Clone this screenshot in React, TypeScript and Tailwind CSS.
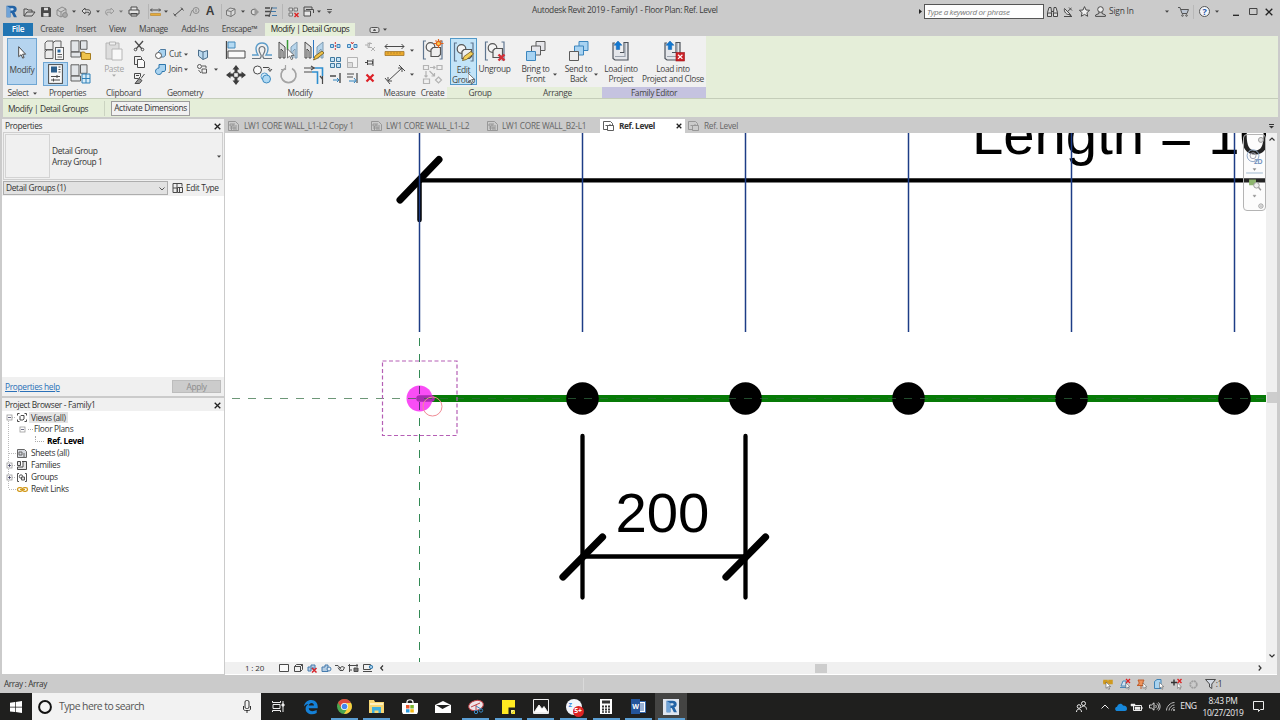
import type { ReactNode } from "react";

interface BoxProps {
  className?: string;
  children?: ReactNode;
}

function Cell({ className = "", children }: BoxProps) {
  return <div className={`flex shrink-0 items-center justify-center ${className}`}>{children}</div>;
}

interface IconProps {
  w: number;
  h: number;
  stroke?: string;
  sw?: number;
  fill?: string;
  className?: string;
  children: ReactNode;
}

function Icon({ w, h, stroke = "#4a4a4a", sw = 1, fill = "none", className = "", children }: IconProps) {
  return (
    <svg
      width={w}
      height={h}
      viewBox={`0 0 ${w} ${h}`}
      fill={fill}
      stroke={stroke}
      strokeWidth={sw}
      className={`block shrink-0 overflow-visible ${className}`}
    >
      {children}
    </svg>
  );
}

function Caret({ color = "#444" }: { color?: string }) {
  return (
    <Icon w={4} h={3} stroke="none" fill={color}>
      <path d="M0 0.5h4l-2 2.2z" />
    </Icon>
  );
}

function Cursor() {
  return <path d="M0 0v9l2.2-2 1.6 3.6 1.5-.7-1.6-3.4h3z" fill="#fff" stroke="#555" strokeWidth={0.8} />;
}

function RevitLogo({ size = 12 }: { size?: number }) {
  return (
    <svg width={size} height={size} viewBox="0 0 12 12" className="block shrink-0">
      <path d="M1.5.8h5.600c2.4 0 3.700 1.200 3.700 3.100 0 1.500-.8 2.500-2.100 2.900l2.300 4.400H8.200L6.200 7.300H5v3.900H1.500z" fill="#2363a5" />
      <path d="M1.500.8 5 3v8.200H1.500z" fill="#6fa3d8" />
      <path d="M5 3h1.800c.8 0 1.200.4 1.200 1s-.4 1.100-1.200 1.100H5z" fill="#cfdff0" />
    </svg>
  );
}

function CloseX({ size = 7 }: { size?: number }) {
  return (
    <Icon w={size} h={size} stroke="#222" sw={1.3}>
      <path d={`M.7.7l${size - 1.4} ${size - 1.4}M${size - 0.7}.7L.7 ${size - 0.7}`} />
    </Icon>
  );
}

function TitleBar() {
  return (
    <div className="flex h-[23px] items-center pl-[3px] text-[#3c3c3c]">
      <Cell className="w-[16px]"><RevitLogo size={13} /></Cell>
      <Cell className="w-[20px]">
        <Icon w={12} h={10}><path d="M1 9V2h3l1 1h4v2M1 9l3-4h8L9 9z" /></Icon>
      </Cell>
      <Cell className="w-[14px]">
        <Icon w={10} h={10} fill="#4a4a4a"><path d="M.5.500h8l1 1v8h-9z" /><path d="M3 .8h4v2.400H3zM2.400 6h5.200v3.400H2.400z" fill="#ddd" stroke="none" /></Icon>
      </Cell>
      <Cell className="w-[18px]">
        <Icon w={12} h={12} stroke="#8b8b8b"><path d="M1 4l5-3 4 2v5L5 11 1 9zM1 4l4 2v5M5 6l5-3" /><circle cx="9" cy="9" r="2.4" fill="#aaa" /></Icon>
      </Cell>
      <Cell className="w-[5px]"><Caret /></Cell>
      <Cell className="w-[20px]">
        <Icon w={11} h={9}><path d="M4 1L1 4l3 3V5.200h3c2 0 1.500 2 .5 3C10 7.500 10.500 2.800 7 2.800H4z" fill="#e0e0e0" /></Icon>
      </Cell>
      <Cell className="w-[4px]"><Caret /></Cell>
      <Cell className="w-[18px]">
        <Icon w={11} h={9} stroke="#9b9b9b"><path d="M7 1l3 3-3 3V5.200H4c-2 0-1.500 2-.5 3C1 7.500.5 2.800 4 2.800h3z" /></Icon>
      </Cell>
      <Cell className="w-[6px]"><Caret color="#777" /></Cell>
      <Cell className="w-[20px]">
        <Icon w={12} h={11}><path d="M3 4V1h6v3M1 4h10v4H1zM3 7.500h6V10H3z" fill="#e4e4e4" /></Icon>
      </Cell>
      <Cell className="w-[4px]" />
      <Cell className="h-[15px] w-[13px] border-l border-[#b5b5b5]">
        <Icon w={11} h={8}><path d="M.5 2h10M2 .5L.5 2 2 3.500M9 .5L10.500 2 9 3.500" /><path d="M.5 5.500h10v2H.5z" fill="#e5ac3a" stroke="#b98223" strokeWidth={0.6} /></Icon>
      </Cell>
      <Cell className="w-[10px]"><Caret /></Cell>
      <Cell className="w-[15px]">
        <Icon w={11} h={10}><path d="M1.500 8.500l8-7M.5 6.500l2.500 3M8 .5l2.500 3" /></Icon>
      </Cell>
      <Cell className="w-[16px]">
        <Icon w={11} h={10} stroke="#858585" sw={0.9}><circle cx="7" cy="3.500" r="3" /><path d="M4 3.500H3L1 9M7 2v3" /></Icon>
      </Cell>
      <Cell className="w-[16px] pb-px font-['Liberation_Sans'] text-[12px] font-bold">A</Cell>
      <Cell className="w-[3px]" />
      <Cell className="h-[15px] w-[20px] border-l border-[#b5b5b5]">
        <Icon w={11} h={10} stroke="#777"><path d="M.5 3.500L4 1l5 1v5L5 9.500.5 8zM.5 3.500L5 4.500v5M5 4.500L9 2" fill="#d8d8d8" /></Icon>
      </Cell>
      <Cell className="w-[4px]"><Caret /></Cell>
      <Cell className="w-[18px]">
        <Icon w={9} h={10} stroke="#6b6b6b"><circle cx="4" cy="5" r="2.800" fill="#ddd" /><path d="M4.500 .5L9 5 4.500 9.500z" fill="#999" stroke="none" /></Icon>
      </Cell>
      <Cell className="w-[16px]">
        <Icon w={12} h={10}><path d="M0 1h5M0 4.500h5M0 8.500h5" strokeWidth={1.600} /><path d="M7 1h5M6 4.500h5M7 8.500h5" stroke="#4078a8" /><path d="M7 0L4 10" /></Icon>
      </Cell>
      <Cell className="w-[3px]" />
      <Cell className="h-[15px] w-[21px] border-l border-[#b5b5b5]">
        <Icon w={11} h={10} stroke="#777"><path d="M1 1h3.500v3H1zM6 1h3.500v3H6zM1 6h3.500v3H1z" fill="#ddd" /><path d="M6.500 6l4 4M10.500 6l-4 4" stroke="#d22" strokeWidth={1.400} /></Icon>
      </Cell>
      <Cell className="w-[11px]">
        <Icon w={11} h={11}><path d="M1 5V1h8v2M3 3.500h7.500V7" /><path d="M1 5h6.500v5H1z" fill="#e6e6e6" /></Icon>
      </Cell>
      <Cell className="w-[9px]"><Caret /></Cell>
      <Cell className="w-[12px]">
        <Icon w={5} h={5} stroke="#555"><path d="M0 .5h5" /><path d="M0 2.300h5l-2.500 2.500z" fill="#555" stroke="none" /></Icon>
      </Cell>

      <div className="ml-[197px] w-[200px] pb-[3px] text-[8.4px] whitespace-nowrap">
        Autodesk Revit 2019 - Family1 - Floor Plan: Ref. Level
      </div>

      <div className="ml-auto flex items-center">
        <Icon w={3} h={5} stroke="none" fill="#222" className="mr-[2px]"><path d="M0 0l3 2.500L0 5z" /></Icon>
        <div className="mr-[1px] flex h-[15px] w-[120px] items-center border border-[#555] bg-[#fdfdfd] pl-[2px] text-[8px] text-[#777] italic">
          Type a keyword or phrase
        </div>
        <Cell className="w-[14px]">
          <Icon w={11} h={10} stroke="#454545"><path d="M2 .5h2l.5 5v4h-4v-4zM7 .5h2l1.500 5v4h-4v-4zM4.500 4.500h2M.5 6h4M6.500 6h4" fill="#ddd" /></Icon>
        </Cell>
        <Cell className="w-[18px]">
          <Icon w={10} h={10}><path d="M1.500 1.500c-1 3 2 7 6 6zM4.500 4.500l4-3.500M1 9.500h8L6 7.500M6 .5l3 3" fill="#ddd" /></Icon>
        </Cell>
        <Cell className="w-[14px]">
          <Icon w={11} h={11}><path d="M5.500.6l1.500 3.400 3.600.3-2.700 2.400.8 3.600-3.200-1.900-3.200 1.900.8-3.600L.4 4.300 4 4z" fill="#eee" /></Icon>
        </Cell>
        <Cell className="w-[18px]">
          <Icon w={11} h={11}><circle cx="5.500" cy="3.500" r="2.800" fill="#eee" /><path d="M4 6v1.500L.6 9v1.400h9.800V9L7 7.500V6" /></Icon>
        </Cell>
        <div className="w-[52px] text-[8.4px] tracking-[-0.2px]">Sign In</div>
        <Cell className="w-[12px]"><Caret /></Cell>
        <Cell className="w-[20px]">
          <Icon w={11} h={10} stroke="#555"><path d="M0 .5h2l2 6h5l1.500-4H3" fill="#bcc5d2" /><circle cx="4.500" cy="8.500" r=".8" /><circle cx="8.500" cy="8.500" r=".8" /></Icon>
        </Cell>
        <Cell className="h-[14px] w-[22px] border-l border-[#b8b8b8]">
          <div className="flex h-[11px] w-[11px] items-center justify-center rounded-full border border-[#555] bg-[#f4f6fa] text-[9px] font-bold text-[#2857a8]">?</div>
        </Cell>
        <Cell className="w-[4px]"><Caret /></Cell>
        <Cell className="w-[28px] pl-[6px]"><Icon w={6} h={8} stroke="#222" sw={1.300}><path d="M0 7.300h6" /></Icon></Cell>
        <Cell className="w-[11px]"><Icon w={8} h={7} stroke="#444"><path d="M.5.500h7.500v6H.5z" /></Icon></Cell>
        <Cell className="w-[22px]"><CloseX size={8} /></Cell>
      </div>
    </div>
  );
}

function TabStrip() {
  return (
    <div className="flex h-[13px] items-center pl-[3px] text-[8.3px] text-[#444] [&>*]:h-full">
      <Cell className="w-[30px] bg-[#2175b3] font-semibold text-white">File</Cell>
      <Cell className="w-[38px]">Create</Cell>
      <Cell className="w-[30px]">Insert</Cell>
      <Cell className="w-[33px]">View</Cell>
      <Cell className="w-[39px]">Manage</Cell>
      <Cell className="w-[44px]">Add-Ins</Cell>
      <Cell className="w-[45px]">Enscape™</Cell>
      <Cell className="w-[3px]" />
      <Cell className="w-[90px] bg-[#e5eed9] tracking-[-0.45px] whitespace-nowrap text-[#222]">Modify | Detail Groups</Cell>
      <Cell className="ml-[14px] gap-[3px]">
        <Icon w={11} h={6} stroke="#555"><rect x="1" y=".5" width="9" height="5" rx="1.500" fill="#ddd" /><path d="M4.500 3.500h2L5.500 2z" fill="#222" /></Icon>
        <Caret />
      </Cell>
    </div>
  );
}

interface PanelProps extends BoxProps {
  label: ReactNode;
  labelClass?: string;
}

function Panel({ label, labelClass = "", className = "", children }: PanelProps) {
  return (
    <div className={`flex shrink-0 flex-col bg-[#f0f0f0] ${className}`}>
      <div className="flex h-[51px] pt-[2px]">{children}</div>
      <div className={`flex h-[11px] items-center justify-center pt-px text-[8.4px] whitespace-nowrap text-[#444] ${labelClass}`}>{label}</div>
    </div>
  );
}

interface BigButtonProps extends BoxProps {
  icon: ReactNode;
}

function BigButton({ icon, className = "", children }: BigButtonProps) {
  return (
    <div className={`flex h-[47px] shrink-0 flex-col items-center text-center text-[8.4px] leading-[9.5px] whitespace-nowrap text-[#444] ${className}`}>
      <div className="flex h-[26px] items-center">{icon}</div>
      {children}
    </div>
  );
}

function MoveIcon() {
  return (
    <Icon w={20} h={20} stroke="none" fill="#3d3d3d">
      <path d="M10 0l3.500 4.500h-2V8h-3V4.500h-2zM10 20l3.500-4.500h-2V12h-3v3.500h-2zM0 10l4.500-3.500v2H8v3H4.500v2zM20 10l-4.500-3.500v2H12v3h3.500v2z" />
      <path d="M7.700 7.700h4.600v4.600H7.700z" fill="#f0f0f0" stroke="#3d3d3d" />
    </Icon>
  );
}

function GroupBrackets({ children }: { children?: ReactNode }) {
  return (
    <Icon w={22} h={20} stroke="#555" sw={1.200}>
      <path d="M4 1H1.500v18H4M17.500 1H20v18h-2.500" stroke="#5f7690" />
      <circle cx="8.500" cy="7" r="4.300" fill="#f4f4f4" />
      <path d="M9 9.500l2-2h7.500v7l-2 2H9z" fill="#eee" />
      {children}
    </Icon>
  );
}

function LoadIcon({ close }: { close?: boolean }) {
  return (
    <Icon w={21} h={20} stroke="#4d535b" sw={1.200}>
      <path d="M4 2H2v15.500l2 1.500h13V1.500h-4v10H9" fill="#e4e6ea" />
      <path d="M4 15.500h10V2" stroke="#9aa2ad" />
      <path d="M7 0L3 4.200h2.300v4.300h3.400V4.200H11z" fill="#1379d2" stroke="#1061ab" strokeWidth={0.5} />
      {close && (
        <>
          <rect x="13" y="11.500" width="8.500" height="8.500" fill="#cc2127" stroke="#99151a" strokeWidth={0.6} />
          <path d="M15 13.700l4.400 4.200M19.400 13.700l-4.400 4.200" stroke="#fff" />
        </>
      )}
    </Icon>
  );
}

function Ribbon() {
  return (
    <div className="mr-[2px] ml-[3px] flex h-[63px] border-b border-[#c4cdb9] bg-[#e5eed9]">
      <Panel className="w-[38px]" label={<span className="flex items-center gap-[4px]">Select <Caret /></span>}>
        <BigButton
          className="ml-[4px] w-[30px] border border-[#6fa6d3] bg-[#b5d4ef]"
          icon={<Icon w={8} h={13}><path d="M.7.7v10l2.400-2 1.600 3.500 1.400-.7-1.500-3.300h3z" fill="#fff" /></Icon>}
        >
          Modify
        </BigButton>
      </Panel>

      <Panel className="w-[53px]" label="Properties">
        <div className="grid h-[48px] w-[52px] grid-cols-2 grid-rows-2">
          <Cell>
            <Icon w={20} h={20} stroke="#606060">
              <path d="M1 3L3 1h6v8.500H1zM9 3l2-2h6v6M1 12l2-2h6v8.500H1zM1 9.500v2" fill="#ececec" />
              <rect x="11.500" y="7.500" width="8" height="12" fill="#f7f7f7" /><path d="M13.500 9.500h3v3h-3z" fill="#2d689d" stroke="none" /><path d="M13.500 14.500h4.500M13.500 17h4.500" />
            </Icon>
          </Cell>
          <Cell>
            <Icon w={21} h={20} stroke="#606060">
              <path d="M1 .8h8v11H1zM10.500.8h6.500v8.500h-6.500zM1 12h9.500v5H1z" fill="#e2e5e8" />
              <path d="M11.500 12h3l1 1.500h5v6h-9z" fill="#efc34c" stroke="#a67c1d" />
            </Icon>
          </Cell>
          <Cell className="ml-[2px] h-[24px] w-[25px] border border-[#6fa6d3] bg-[#b9d9f3]">
            <Icon w={15} h={20}>
              <rect x=".6" y=".6" width="13.800" height="18.800" fill="#f8f8f8" />
              <path d="M3 2.500h6v6H3z" fill="#2d5f8c" stroke="none" /><path d="M10.500 3h2M10.500 5.500h2M10.500 8h2M3 12.500h9M3 16h9M9 11v3M5.500 14.500v3" />
            </Icon>
          </Cell>
          <Cell>
            <Icon w={21} h={20} stroke="#606060">
              <path d="M1 .8h8v11H1zM10.500.8h6.500v8.500h-6.500zM1 12h9.500v5H1z" fill="#e2e5e8" />
              <path d="M12 10h8v9h-8zM16 10v9M12 14.500h8" fill="#d8ecf8" stroke="#2f80b8" />
            </Icon>
          </Cell>
        </div>
      </Panel>

      <Panel className="w-[59px]" label="Clipboard">
        <BigButton
          className="ml-[6px] w-[28px] text-[#a3a3a3]"
          icon={<Icon w={18} h={20} stroke="#b6b6b6"><path d="M1 2h13v16H1z" fill="#ddd" /><path d="M4.500 1h6v3h-6z" fill="#efefef" /><path d="M7 8h10v11H7z" fill="#f8f8f8" /></Icon>}
        >
          <span className="text-[#a3a3a3]">Paste</span>
          <Caret color="#aaa" />
        </BigButton>
        <div className="flex w-[22px] flex-col">
          <Cell className="h-[16px]"><Icon w={10} h={10}><path d="M1 0l7 8M9 0L2 8" strokeWidth={1.300} /><circle cx="1.500" cy="8.500" r="1.300" /><circle cx="8.500" cy="8.500" r="1.300" /></Icon></Cell>
          <Cell className="h-[16px]"><Icon w={11} h={12}><path d="M.5.500h6l1 1v7h-7z" fill="#eee" /><path d="M3.500 3.500h5l2 2v6h-7z" fill="#fafafa" /></Icon></Cell>
          <Cell className="h-[16px]"><Icon w={11} h={11}><path d="M.5.500h6v3l-2 2h-4zM2 2.500h3M10.500 1L7 5.500" /><path d="M5 5.500l3 2-2.500 3H1z" fill="#999" /></Icon></Cell>
        </div>
      </Panel>

      <Panel className="w-[67px]" label="Geometry" labelClass="pr-[3px]">
        <div className="grid h-[32px] grid-cols-[14px_17px_7px_23px_4px] grid-rows-2 items-center self-center pb-[2px] text-[8.4px] text-[#444]">
          <Cell><Icon w={11} h={10} stroke="#4d7ba1"><path d="M3.500 2.500l2-2h5v6l-2 1.500h-5z" fill="#a9d3f0" /><circle cx="3.500" cy="6.500" r="3" fill="#fff" stroke="#555" /></Icon></Cell>
          <span className="pl-[2px]">Cut</span>
          <Caret />
          <Cell><Icon w={10} h={11}><path d="M.5 1v6L5 10.500V3zM5 3l4.500-1.500v7L5 10.500" fill="#bcdaf0" stroke="#4b6e8b" /></Icon></Cell>
          <span />
          <Cell><Icon w={11} h={11} stroke="#2d77ad"><path d="M4 .5h6.500V6l-1 1.500H7c0 2-1.500 3-3.300 3S.5 9 .5 7.300 2 4 4 4z" fill="#a9d3f0" /></Icon></Cell>
          <span className="pl-[2px]">Join</span>
          <Caret />
          <Cell><Icon w={11} h={10} sw={0.9}><circle cx="2.500" cy="2.500" r="2" /><path d="M5 5h4.500v4H5zM5 2h4v2M1.500 6l2.500 3" /></Icon></Cell>
          <Caret />
        </div>
      </Panel>

      <Panel className="w-[160px]" label="Modify">
        <div className="ml-[3px] grid h-[49px] grid-cols-[26px_26px_26px_25px] grid-rows-2">
          <Cell><Icon w={20} h={18}><path d="M.5 0v18" strokeWidth={1.300} /><path d="M2 1h7v6H2z" fill="#b4daf3" stroke="#458abb" /><path d="M2 10h17v7H2z" fill="#fafafa" /></Icon></Cell>
          <Cell>
            <Icon w={20} h={17} stroke="#6b747c">
              <path d="M0 16.500h8c1.500-1.500 1.500-3 .5-4.500C6 8 7 4.500 10 4.500S14 8 11.500 12c-1 1.500-1 3 .5 4.500h8" strokeWidth={1.200} />
              <path d="M0 13h6C2 6.500 4.500 1 10 1s8 5.500 4 12h6" stroke="#5c9cc9" strokeWidth={1.400} />
            </Icon>
          </Cell>
          <Cell><Icon w={20} h={19}><path d="M1 1l6 5v11H5V10L3 8v9H1z" fill="#ddd" /><path d="M19 1l-6 5v11h2V10l2-2v9h2z" fill="#b7d5ec" stroke="#7d9ab1" /><path d="M9.500-1v10" stroke="#3a9a35" strokeWidth={1.500} /><g transform="translate(9.500 8)"><Cursor /></g></Icon></Cell>
          <Cell><Icon w={20} h={19}><path d="M1 1l6 5v11H5V10L3 8v9H1z" fill="#ddd" /><path d="M19 1l-6 5v11h2V10l2-2v9h2z" fill="#b7d5ec" stroke="#7d9ab1" /><path d="M9.500-1v18" stroke="#2d77c1" /><path d="M9.500 19l1.500-4 7-5 2 2-7 5.500z" fill="#f0c245" stroke="#6c5520" strokeWidth={0.8} /></Icon></Cell>
          <Cell><MoveIcon /></Cell>
          <Cell><Icon w={19} h={19}><circle cx="4.500" cy="5" r="4" fill="#fafafa" /><path d="M10 2.500h5c1.500 0 2 1 2 3M15 4l2 2.500L19 4" /><circle cx="11.500" cy="11.500" r="3.500" fill="#d5eaf7" stroke="#5a9dcd" /><circle cx="13.500" cy="14" r="4" fill="#b0d9f3" stroke="#3e8bc0" /></Icon></Cell>
          <Cell><Icon w={19} h={19} stroke="#a4a4a4" sw={1.700}><path d="M6 3.500a7.500 7.500 0 1 0 7 0" /><path d="M6.500 0v4.500H2" strokeWidth={1.200} /></Icon></Cell>
          <Cell><Icon w={20} h={19} sw={1.200}><path d="M0 3h11M0 7h8M18.500 11v8" /><path d="M11 3h7.500v8M8 7h5.500v12" stroke="#2e8fd0" strokeWidth={1.600} /><path d="M7 1l3 2-3 2M16 11l2.500 3" /></Icon></Cell>
        </div>
        <div className="ml-[1px] grid h-[48px] grid-cols-[17px_17px_17px] grid-rows-3">
          <Cell><Icon w={11} h={8} stroke="#3f84ba"><path d="M.5 2.500h3v3h-3zM7 2.500h3v3H7z" fill="#b5daf2" /><path d="M5.300 0v8" stroke="#c33" strokeDasharray="2 1" /></Icon></Cell>
          <Cell><Icon w={11} h={8} stroke="#3f84ba"><path d="M.5 2.500h3v3h-3zM7 2.500h3v3H7z" fill="#b5daf2" /><path d="M4 0l1.300 2L6.500 0M4 8l1.300-2L6.500 8" stroke="#c33" /></Icon></Cell>
          <Cell><Icon w={10} h={10} stroke="#b0b0b0"><path d="M0 4h3M3 1.500v5h4M3 2.500h4M5 1l-1 5M6 6l4 4M10 6l-4 4" /></Icon></Cell>
          <Cell><Icon w={11} h={11} stroke="#41799f"><path d="M.5.500h4v4h-4zM6.500.500h4v4h-4zM.5 6.500h4v4h-4zM6.500 6.500h4v4h-4z" fill="#c6e3f6" /></Icon></Cell>
          <Cell><Icon w={11} h={11} stroke="#b3b3b3"><path d="M.5.500h10v10H.5z" fill="#f3f3f3" /><path d="M.5 5.500h5v5h-5z" fill="#ddd" /></Icon></Cell>
          <Cell><Icon w={9} h={7}><path d="M0 3.500h2.500M2.500 1v5M2.500 2h5v3h-5M8 0v7" /></Icon></Cell>
          <Cell><Icon w={11} h={10}><path d="M0 3h6M10 0v10" strokeWidth={1.400} /><path d="M3 7h6M7 5l2 2-2 2" stroke="#2e82bd" /></Icon></Cell>
          <Cell><Icon w={11} h={10}><path d="M0 1h7M0 4h6M10 0v10" strokeWidth={1.200} /><path d="M2 8h7M7 5l2 2.500L7 10" stroke="#2e82bd" /></Icon></Cell>
          <Cell><Icon w={8} h={8} stroke="#dc2026" sw={2.200}><path d="M.5.500l7 7M7.500.500l-7 7" /></Icon></Cell>
        </div>
      </Panel>

      <Panel className="w-[38px]" label="Measure" labelClass="pl-px">
        <div className="ml-[5px] grid h-[48px] grid-cols-[20px_9px] grid-rows-2 items-center">
          <Icon w={20} h={12}><path d="M0 2.500h19M2.500 0L0 2.500 2.500 5M16.500 0L19 2.500 16.500 5" /><path d="M0 7.500h19v4H0z" fill="#e9a92d" stroke="#a37527" strokeWidth={0.8} /><path d="M3 8v2M6 8v2M9 8v2M12 8v2M15 8v2" stroke="#a37527" strokeWidth={0.6} /></Icon>
          <Cell className="pl-[4px]"><Caret /></Cell>
          <Icon w={20} h={19}><path d="M3 16L17 3M0 13l5 6M14 0l6 6M3 12v4h4M13 3h4v4" /></Icon>
          <Cell className="pl-[4px]"><Caret /></Cell>
        </div>
      </Panel>

      <Panel className="w-[29px]" label="Create">
        <div className="grid h-[48px] w-full grid-rows-2 justify-items-center">
          <Cell><GroupBrackets><circle cx="16.500" cy="3.500" r="2.200" fill="#ffc84a" stroke="#e0641e" /><path d="M16.500-1v2M16.500 6v2M12 3.500h2M19 3.500h2.500M13.500.500l1 1M19.500.500l-1 1" stroke="#e0641e" /></GroupBrackets></Cell>
          <Cell><Icon w={19} h={19} stroke="#b3b3b3" sw={1.200}><path d="M.5.500h5v4h-5zM14 .5h5v4h-5zM.5 14h6v4.500h-6zM15.500 12l3 3-3 3-3-3zM7 2.500h5M10.500 1L12 2.500 10.500 4M3 6v6M1.500 10.500L3 12l1.500-1.500M6.500 6l5 5M11.500 8v3h-3" /></Icon></Cell>
        </div>
      </Panel>

      <Panel className="w-[66px]" label="Group" labelClass="bg-[#e5eed9]">
        <div className="relative">
          <BigButton
            className="ml-[3px] w-[27px] border border-[#5299c8] bg-[#c3e4f8]"
            icon={<GroupBrackets><path d="M9.500 18.500l1.500-4 7-5 2.500 2.500-7 5.500z" fill="#f3cf58" stroke="#6c5520" strokeWidth={0.8} /></GroupBrackets>}
          >
            Edit<br />Group
          </BigButton>
          <svg width="8" height="12" className="absolute top-[35px] left-[21px]"><Cursor /></svg>
        </div>
        <BigButton
          className="ml-px w-[33px]"
          icon={<GroupBrackets><path d="M14.500 13.500l6 6M20.500 13.500l-6 6" stroke="#d43038" strokeWidth={2.400} /></GroupBrackets>}
        >
          Ungroup
        </BigButton>
      </Panel>

      <Panel className="w-[89px]" label="Arrange" labelClass="bg-[#e5eed9]">
        <BigButton
          className="ml-[5px] w-[35px]"
          icon={<Icon w={20} h={20} stroke="#5b5b5b"><path d="M10 .5h9v9h-9z" fill="#e6e6ea" /><path d="M5.500 5h9v9h-9z" fill="#e6e6ea" /><path d="M.5 10.500h9v9h-9z" fill="#a8d3f2" stroke="#3c86be" /></Icon>}
        >
          Bring to<br />Front
        </BigButton>
        <div className="flex w-[5px] items-end pb-[11px]"><Caret /></div>
        <BigButton
          className="ml-px w-[39px]"
          icon={<Icon w={20} h={20} stroke="#5b5b5b"><path d="M10 .5h9v9h-9z" fill="#a8d3f2" stroke="#3c86be" /><path d="M5.500 5h9v9h-9z" fill="#a8d3f2" stroke="#3c86be" /><path d="M.5 10.500h9v9h-9z" fill="#ececec" /></Icon>}
        >
          Send to<br />Back
        </BigButton>
        <div className="-ml-[4px] flex items-end pb-[11px]"><Caret /></div>
      </Panel>

      <Panel className="w-[104px]" label="Family Editor" labelClass="bg-[#c5c3e0]">
        <BigButton className="w-[38px]" icon={<LoadIcon />}>Load into<br />Project</BigButton>
        <BigButton className="w-[66px]" icon={<LoadIcon close />}>Load into<br />Project and Close</BigButton>
      </Panel>
    </div>
  );
}

function OptionsBar() {
  return (
    <div className="mr-[2px] ml-[3px] flex h-[18px] items-center bg-[#e5eed9] text-[8.4px] text-[#333]">
      <div className="flex h-[15px] w-[102px] items-center border-r border-[#cbd3c1] pt-[2px] pl-[5px] tracking-[-0.42px]">Modify | Detail Groups</div>
      <div className="ml-[6px] flex h-[15px] w-[79px] items-center justify-center border border-[#9c9c9c] bg-[#f1f1f1] pt-px whitespace-nowrap">
        Activate Dimensions
      </div>
    </div>
  );
}

function PropertiesPanel() {
  return (
    <div className="flex h-[277px] flex-col bg-[#f0f0f0] text-[8.4px] text-[#333]">
      <div className="flex h-[13px] items-center justify-between pt-px pr-[3px] pl-[3px]">
        Properties
        <CloseX />
      </div>
      <div className="mx-px flex h-[48px] items-center border border-[#cfcfcf] pl-px">
        <div className="h-[44px] w-[45px] border border-[#d3d3d3]" />
        <div className="ml-[2px] flex-1 leading-[11px]">
          Detail Group<br />Array Group 1
        </div>
        <Cell className="w-[7px]"><Caret /></Cell>
      </div>
      <div className="flex h-[16px] items-center pl-px">
        <div className="flex h-[14px] w-[165px] items-center justify-between border border-[#adadad] bg-[#e2e2e2] pt-px pr-[2px] pl-[2px]">
          Detail Groups (1)
          <Icon w={6} h={4} stroke="#555"><path d="M.5.500L3 3 5.500.5" /></Icon>
        </div>
        <Icon w={11} h={10} className="mr-[3px] ml-[4px]"><path d="M1 .5h4v9H1zM5 .5h5v3M1 5h4M5.500 4.500h5v5h-5zM7.500 4.500v5" fill="#eee" /></Icon>
        <span className="whitespace-nowrap">Edit Type</span>
      </div>
      <div className="flex-1 bg-white" />
      <div className="flex h-[19px] items-center justify-between pr-[3px] pl-[3px]">
        <span className="pt-px text-[#2a70b8] underline">Properties help</span>
        <Cell className="h-[13px] w-[49px] border border-[#bdbdbd] bg-[#cccccc] pt-px text-[#8b8b8b]">Apply</Cell>
      </div>
    </div>
  );
}

function Expander({ open }: { open?: boolean }) {
  return (
    <Icon w={5} h={5} stroke="#999">
      <rect x="0" y="0" width="5" height="5" fill="#fff" strokeWidth={0.8} />
      <path d={open ? "M1 2.500h3" : "M1 2.500h3M2.500 1v3"} strokeWidth={0.8} stroke="#446" />
    </Icon>
  );
}

function ProjectBrowser() {
  return (
    <div className="flex flex-1 flex-col bg-white text-[8.4px] text-[#333]">
      <div className="flex h-[13px] items-center justify-between bg-[#f0f0f0] pt-px pr-[3px] pl-[3px]">
        Project Browser - Family1
        <CloseX />
      </div>
      <div className="relative flex flex-col [&>*]:flex [&>*]:h-[12px] [&>*]:items-center">
        <svg width="16" height="84" className="pointer-events-none absolute top-0 left-0 !h-[84px]" fill="none" stroke="#bbb" strokeDasharray="1 1">
          <path d="M6.500 10v68M7 42.500h7M7 78.500h7M10 6.500h4M10 54.500h4M10 66.500h4" />
        </svg>
        <div>
          <Cell className="relative w-[14px]"><Expander open /></Cell>
          <Cell className="w-[12px]"><Icon w={10} h={9}><path d="M2.500.500h-2v2M.5 6.500v2h2M7.500.500h2v2M9.500 6.500v2h-2" /><path d="M3 3.500l1-1h3v3.500l-1 1H3z" /></Icon></Cell>
          <span className="ml-[1px] bg-[#e4e4e4] px-[2px] leading-[11px]">Views (all)</span>
        </div>
        <div>
          <Cell className="ml-[14px] w-[12px]"><Expander open /></Cell>
          <span className="mr-px w-[5px] border-t border-dotted border-[#aaa]" />Floor Plans
        </div>
        <div className="font-bold text-black">
          <span className="mr-[3px] mb-[5px] ml-[33px] h-[6px] w-[9px] border-b border-l border-dotted border-[#aaa]" />Ref. Level
        </div>
        <div>
          <Cell className="ml-[14px] w-[12px]"><Icon w={10} h={9} stroke="#666"><path d="M.5.500h7l2 2v6h-9z" fill="#d7dae0" /><path d="M2 3h3v3H2zM6 5h2M6 7h2" /></Icon></Cell>
          <span className="pl-[3px]">Sheets (all)</span>
        </div>
        <div>
          <Cell className="relative w-[14px]"><Expander /></Cell>
          <Cell className="w-[12px]"><Icon w={10} h={9}><path d="M.5.500h3v4h-3zM5 .5h4.500v8h-9V6H6V.5" fill="#e5e5e5" /></Icon></Cell>
          <span className="pl-[3px]">Families</span>
        </div>
        <div>
          <Cell className="relative w-[14px]"><Expander /></Cell>
          <Cell className="w-[12px]"><Icon w={10} h={9} stroke="#555"><path d="M2 .5H.5v8H2M8 .5h1.500v8H8" /><circle cx="4" cy="3.500" r="1.700" /><path d="M4.500 4h3v3h-3z" fill="#ddd" /></Icon></Cell>
          <span className="pl-[3px]">Groups</span>
        </div>
        <div>
          <Cell className="ml-[14px] w-[12px]"><Icon w={11} h={5} stroke="#d29a1d" sw={1.300}><rect x=".5" y=".7" width="5" height="3.600" rx="1.800" /><rect x="5.500" y=".7" width="5" height="3.600" rx="1.800" /><path d="M3 2.500h5" /></Icon></Cell>
          <span className="pl-[3px]">Revit Links</span>
        </div>
      </div>
    </div>
  );
}

function ViewIcon({ dim, plan }: { dim?: boolean; plan?: boolean }) {
  return (
    <Icon w={11} h={10} stroke={dim ? "#929292" : "#4c4c4c"} sw={0.9}>
      {plan ? (
        <path d="M4.500 8.500h-4v-8h7l2 2v2M4.500 4.500h6v5h-6zM4.500 4.500h-2M7 4.500V3" />
      ) : (
        <path d="M.5.500h7l3 3v6H.5zM2 3h3v2H2zM6 2v7M2 7h6M8 4v5M3.500 5v4" />
      )}
    </Icon>
  );
}

function ViewTabs() {
  return (
    <div className="flex h-[14px] items-center text-[8.3px] tracking-[-0.28px] whitespace-nowrap text-[#666] [&>*]:h-full">
      <div className="flex w-[143px] items-center gap-[5px] pl-[3px]"><ViewIcon dim />LW1 CORE WALL_L1-L2 Copy 1</div>
      <div className="flex w-[116px] items-center gap-[4px] pl-[3px]"><ViewIcon dim />LW1 CORE WALL_L1-L2</div>
      <div className="flex w-[116px] items-center gap-[4px] pl-[3px]"><ViewIcon dim />LW1 CORE WALL_B2-L1</div>
      <div className="flex w-[85px] items-center gap-[5px] bg-white pr-[3px] pl-[3px] font-bold tracking-[-0.4px] text-[#333]">
        <ViewIcon plan />
        <span className="flex-1">Ref. Level</span>
        <CloseX size={6} />
      </div>
      <div className="flex items-center gap-[5px] pl-[3px]"><ViewIcon dim plan />Ref. Level</div>
      <div className="mr-[3px] ml-auto flex items-center">
        <Icon w={5} h={5} stroke="#333"><path d="M0 .5h5" /><path d="M0 2h5L2.500 4.600z" fill="#333" stroke="none" /></Icon>
      </div>
    </div>
  );
}

const gridX = [419.5, 582.5, 745.5, 908.5, 1071.5, 1234.5];

// Drawing coordinates follow the window, so the origin is the view's corner.
function Drawing() {
  return (
    <svg width="1041" height="529" viewBox="225 133 1041 529" className="block tracking-normal" fill="none">
      <g fontFamily="Liberation Sans, Arial, sans-serif" fontSize="56.300" fill="#000">
        <text x="971.9" y="154">Length = 10</text>
        <text x="615.5" y="531.5">200</text>
      </g>
      <path d="M419.500 180.300H1266" stroke="#000" strokeWidth="4.200" />
      <path d="M419.500 180v40" stroke="#000" strokeWidth="4.500" strokeLinecap="round" />
      <path d="M400 200l39-40.500" stroke="#000" strokeWidth="7" strokeLinecap="round" />
      {gridX.map((x) => (
        <path key={x} d={`M${x} 133v199`} stroke="#1d3c86" strokeWidth="1.500" />
      ))}
      <path d="M419.500 338v324" stroke="#338a55" strokeDasharray="8 8" />
      <path d="M420 398.500h846" stroke="#067a06" strokeWidth="6.800" />
      {gridX.slice(1).map((x) => (
        <circle key={x} cx={x} cy="398.500" r="16.300" fill="#000" />
      ))}
      <circle cx="419.500" cy="398.500" r="13" fill="#f94df5" />
      <path d="M419.500 398.500h12" stroke="#a72bb0" strokeWidth="6.500" strokeLinecap="round" />
      <path d="M232 398.500h1034" stroke="#2f6b3f" strokeDasharray="8 8" opacity=".7" />
      <path d="M419.500 386v24" stroke="#5d2f78" strokeDasharray="8 8" />
      <circle cx="432.500" cy="406.500" r="9.500" stroke="#f08b95" />
      <rect x="382.500" y="361" width="74.500" height="74.500" stroke="#b55fb5" strokeWidth="1.200" strokeDasharray="4 2.500" />
      <g stroke="#000" strokeLinecap="round">
        <path d="M582.500 436v161.500M745.500 436v161.500M582.500 556.500h163" strokeWidth="4.300" />
        <path d="M563 577l39.500-40M726 577l39.500-40" strokeWidth="7.200" />
      </g>
    </svg>
  );
}

function NavBar() {
  return (
    <div className="absolute top-[1px] left-[1018px] flex h-[77px] w-[23px] flex-col items-center overflow-hidden rounded-[4px] border border-[#b4b4b4] bg-[#e8e8e8]/15">
      <svg width="22" height="76" viewBox="0 0 22 76" fill="none" stroke="#9b9b9b">
        <circle cx="17" cy="5" r="2.500" fill="#ddd" />
        <circle cx="9" cy="21" r="6" stroke="#8fa8c7" />
        <circle cx="9" cy="21" r="3" stroke="#a5a5b5" />
        <text x="10" y="29.500" fontSize="7" fontWeight="bold" fill="#6c8dbb" stroke="none" fontFamily="Liberation Sans, sans-serif">2D</text>
        <path d="M9 34h3l-1.500 2zM9 61h3l-1.500 2z" fill="#888" strokeWidth=".5" />
        <path d="M2 38.500h17" stroke="#9fb8cf" />
        <path d="M5 45h7v6H5z" fill="#8db56e" stroke="none" />
        <circle cx="12.500" cy="51" r="2.800" fill="#eee" />
        <path d="M14.500 53l2.500 3" strokeWidth="1.400" />
        <circle cx="17" cy="72" r="2.200" />
        <path d="M16 72h2" />
      </svg>
    </div>
  );
}

function ViewControls() {
  return (
    <div className="flex h-[12px] items-center bg-[#f0f0f0] text-[8px] text-[#333]">
      <div className="w-[51px] pl-[20px] tracking-[-0.15px] whitespace-nowrap">1 : 20</div>
      <Cell className="w-[16px]"><Icon w={10} h={8}><path d="M.5.500h9v7h-9z" fill="#fafafa" /></Icon></Cell>
      <Cell className="w-[13px]"><Icon w={9} h={8}><path d="M.5 2.500l2-2h6v5l-2 2h-6zM.5 2.500h6v5M6.500 2.500l2-2" /></Icon></Cell>
      <Cell className="w-[14px]"><Icon w={10} h={9} stroke="#447aad"><path d="M1 7V3h3V1h4v4M1 7h3V4h3" fill="#b5cde3" /><path d="M5 4l4.500 4.500M9.500 4L5 8.500" stroke="#d4232b" strokeWidth={1.500} /></Icon></Cell>
      <Cell className="w-[14px]"><Icon w={10} h={9} stroke="#447aad"><path d="M1 7.500V3h3V1h3v6.500z" fill="#b5cde3" /><circle cx="8" cy="5" r="2" fill="#e4eef6" /></Icon></Cell>
      <Cell className="w-[14px]"><Icon w={10} h={8}><path d="M0 1.500h3l3 4M3 3.500l2 3h3l1.500-3L7 2.500 5 4" /></Icon></Cell>
      <Cell className="w-[13px]"><Icon w={11} h={8}><path d="M0 1.500h10M1.500 0v8M1 6h3M9 0v3" /><path d="M6 4h4v3.500H6z" fill="#777" /></Icon></Cell>
      <Cell className="w-[15px]"><Icon w={10} h={8}><path d="M.5.500h7v5h-7zM0 7.500h9" /><circle cx="8" cy="3" r="1.700" fill="#9cc6e5" stroke="#3d80b0" /></Icon></Cell>
      <Cell className="w-[13px]"><Icon w={4} h={6} stroke="#333" sw={1.200}><path d="M3 .5L.7 3 3 5.500" /></Icon></Cell>
      <div className="ml-[427px] h-[9px] w-[12px] bg-[#cdcdcd]" />
      <Icon w={4} h={6} stroke="#333" sw={1.200} className="mr-[15px] ml-auto"><path d="M.7.500L3 3 .7 5.500" /></Icon>
    </div>
  );
}

function StatusBar() {
  return (
    <div className="flex h-[18px] items-center pl-[4px] text-[8.2px] text-[#333]">
      <div className="w-[579px]">Array : Array</div>
      <div className="h-[13px] w-px bg-[#dadada]" />
      <div className="ml-auto flex items-center">
        <Cell className="w-[18px]"><Icon w={11} h={11} stroke="#d09a1f" sw={1.500}><path d="M1 3h9M2 1.500h3v3H2zM7 1.500h3v3H7z" /><g transform="translate(4 3) scale(.7)"><Cursor /></g></Icon></Cell>
        <Cell className="w-[17px]"><Icon w={11} h={11} stroke="#4d88b8"><path d="M0 8.500h9M1 7l2-5h3v5z" fill="#d1e3f1" /><path d="M6 0l4 4M10 0L6 4" stroke="#d22" strokeWidth={1.300} /><g transform="translate(6 4) scale(.6)"><Cursor /></g></Icon></Cell>
        <Cell className="w-[17px]"><Icon w={11} h={11} stroke="#c05f2c"><path d="M1 1h6L6 3v2l2 1.500H0L2 5V3zM4 6.500V10" fill="#ec935c" /><g transform="translate(6 4) scale(.6)"><Cursor /></g></Icon></Cell>
        <Cell className="w-[17px]"><Icon w={11} h={11} stroke="#3f83b6"><path d="M.5 2.500L3 .5h4v9H.5z" fill="#a9d3ef" /><g transform="translate(5.500 3.500) scale(.65)"><Cursor /></g></Icon></Cell>
        <Cell className="w-[18px]"><Icon w={12} h={11} stroke="#333"><path d="M0 3.500h6M3 .5v6" strokeWidth={1.400} /><path d="M6.500 0l4 4M10.500 0l-4 4" stroke="#d22" strokeWidth={1.400} /><g transform="translate(6.500 4) scale(.6)"><Cursor /></g></Icon></Cell>
        <Cell className="w-[16px]"><Icon w={9} h={9} stroke="#a0a0a0" sw={1.800}><circle cx="4.500" cy="4.500" r="3.300" strokeDasharray="2 .6" /></Icon></Cell>
        <Icon w={11} h={10} className="ml-[3px]"><path d="M.5.500h10L6.800 5v4.500L4.500 8V5z" fill="#d4dae3" /></Icon>
        <span className="mr-[58px]">:1</span>
      </div>
    </div>
  );
}

interface TaskItemProps extends BoxProps {
  running?: boolean;
}

function TaskItem({ running, className = "w-[33px]", children }: TaskItemProps) {
  return (
    <div className={`flex h-full shrink-0 flex-col items-center ${className}`}>
      <div className="flex flex-1 items-center pt-[2px]">{children}</div>
      <div className={running ? "h-[2px] w-[27px] bg-[#5b9fd4]" : "h-[2px]"} />
    </div>
  );
}

function Taskbar() {
  return (
    <div className="flex h-[27px] items-center bg-[#1f1f1e] text-[#eee]">
      <Cell className="w-[32px]">
        <Icon w={12} h={12} stroke="none" fill="#fff"><path d="M0 1.700l5-.7v4.700H0zM5.700.9L12 0v5.700H5.700zM0 6.400h5v4.700l-5-.7zM5.700 6.400H12V12l-6.300-.9z" /></Icon>
      </Cell>
      <div className="flex h-full w-[229px] items-center bg-[#f2f2f2] pr-[10px] pl-[6px] text-[#555]">
        <Icon w={14} h={14} stroke="#111" sw={2}><circle cx="7" cy="7" r="5.900" /></Icon>
        <span className="ml-[7px] flex-1 text-[10.4px] tracking-[-0.55px] whitespace-nowrap">Type here to search</span>
        <Icon w={8} h={13} stroke="#333"><rect x="2" y=".5" width="4" height="8" rx="1.500" /><path d="M.5 6v3c0 1 1 1.500 2 1.500h3c1 0 2-.5 2-1.500V6M4 10.500V13" /></Icon>
      </div>
      <TaskItem>
        <Icon w={12} h={11} stroke="#eee"><path d="M1 3.500h7v4H1zM.5 0v1.500h8V0M.5 11V9.500h8V11M11 0v11" /><path d="M10 3h2v2h-2z" fill="#eee" /></Icon>
      </TaskItem>
      <TaskItem className="w-[34px]">
        <Icon w={14} h={14} stroke="none" fill="#1581d8"><path d="M0 6.500C.5 2.500 3.500 0 7.200 0 11.500 0 13.700 3.200 13.700 6.500v1.700H4.700c.2 3.200 4.500 3.800 8 1.800v3C8 15.500 1.600 14 1.600 8.700c0-2 1-3.600 3-4.700C2.500 4.200.8 5.300 0 6.500zM4.800 5.600h5.200c0-3.500-4.900-3.300-5.200 0z" /></Icon>
      </TaskItem>
      <TaskItem running className="w-[32px]">
        <Icon w={15} h={15} stroke="none"><circle cx="7.500" cy="7.500" r="7.500" fill="#4ba64f" /><path d="M1 3.700A7.500 7.500 0 0 1 14 4H7.500L4.300 9z" fill="#dd4b3e" /><path d="M14 4a7.500 7.500 0 0 1-7 11l3.500-5.500L9.500 4z" fill="#fccd3e" /><circle cx="7.500" cy="7.500" r="3.600" fill="#fff" /><circle cx="7.500" cy="7.500" r="2.800" fill="#4487ef" /></Icon>
      </TaskItem>
      <TaskItem running>
        <Icon w={15} h={13} stroke="none"><path d="M0 0h5l1 2h9v11H0z" fill="#f7d774" /><path d="M1 3h13v2H1z" fill="#fff1bd" /><path d="M3 7h9v6H9.500v-2.500h-4V13H3z" fill="#3fb0e0" /></Icon>
      </TaskItem>
      <TaskItem>
        <Icon w={16} h={16} stroke="none"><path d="M5 5V3c0-3 6-3 6 0v2" stroke="#fff" strokeWidth="1.200" /><path d="M0 4h16v9l-1 2H1l-1-2z" fill="#fff" /><path d="M4 6h3.500v3.500H4z" fill="#e9552e" /><path d="M8.300 6h3.500v3.500H8.300z" fill="#79b52d" /><path d="M4 10.200h3.500v3.300H4z" fill="#2b9be0" /><path d="M8.300 10.200h3.500v3.300H8.300z" fill="#f5b913" /></Icon>
      </TaskItem>
      <TaskItem>
        <Icon w={16} h={12} stroke="none"><path d="M0 4l8-4 8 4v8H0z" fill="#fff" /><path d="M1 4h14L7.500 8z" fill="#1f1f1e" /></Icon>
      </TaskItem>
      <TaskItem running>
        <Icon w={16} h={14} stroke="#c04348"><ellipse cx="8" cy="5.500" rx="7.500" ry="5" fill="#f0e5e7" transform="rotate(-15 8 5.500)" /><path d="M3 7l9-4M8 5v6" /><circle cx="8" cy="12" r="1.700" stroke="#3a8ac4" /><circle cx="13" cy="10.500" r="1.700" stroke="#3a8ac4" /><path d="M8 6l5 3" stroke="#3a8ac4" /></Icon>
      </TaskItem>
      <TaskItem running className="w-[32px]">
        <Icon w={13} h={14} stroke="none"><path d="M0 0h13v14H0z" fill="#ffe921" /><path d="M6.500 7.500H13V10l-4 4H6.500z" fill="#1f1f1e" /><path d="M9 10h4l-4 4z" fill="#fff47a" /></Icon>
      </TaskItem>
      <TaskItem running>
        <Icon w={16} h={15} stroke="#eee"><path d="M.5.500h15v14H.5z" /><path d="M1 13.500l5-7.500 3 4 2-2.500 4 6z" fill="#fff" /></Icon>
      </TaskItem>
      <TaskItem running>
        <div className="relative h-[16px] w-[16px] rounded-full bg-[#f3f6fb] pt-[3px] pl-[3px] text-[6px] leading-[6px] font-bold text-[#2d86dc]">
          Z
          <div className="absolute top-[7px] left-[7px] flex h-[11px] w-[11px] items-center justify-center rounded-full bg-[#dd2323] text-[7px] text-white">5+</div>
        </div>
      </TaskItem>
      <TaskItem running className="w-[32px]">
        <Icon w={12} h={15} stroke="none"><path d="M0 0h12v15H0z" fill="#fff" /><path d="M2 1.500h8v3H2zM2 6.500h2v2H2zM5 6.500h2v2H5zM8 6.500h2v2H8zM2 9.500h2v2H2zM5 9.500h2v2H5zM8 9.500h2v2H8zM2 12.300h2v1.500H2zM5 12.300h2v1.500H5zM8 12.300h2v1.500H8z" fill="#333" /></Icon>
      </TaskItem>
      <TaskItem running>
        <div className="flex items-center">
          <div className="flex h-[15px] w-[9px] items-center justify-center bg-[#24559b] text-[7px] font-bold text-white">W</div>
          <Icon w={6} h={12} stroke="#3467ac"><path d="M0 .5h5.500v11H0" fill="#fff" /><path d="M0 3h4M0 5h4M0 7h4M0 9h4" /></Icon>
        </div>
      </TaskItem>
      <TaskItem running className="w-[32px] bg-[#444443]">
        <div className="flex h-[16px] w-[16px] items-center justify-center bg-[#dfe5ef]"><RevitLogo size={13} /></div>
      </TaskItem>

      <div className="ml-auto flex items-center text-[8.6px]">
        <Cell className="w-[26px]"><Icon w={11} h={11} stroke="#eee"><circle cx="7.500" cy="2.500" r="2" /><circle cx="3" cy="5.500" r="1.800" /><path d="M.5 11c0-4 5-4 5 0M5.500 6.500c2-3 5-1 5 2" /></Icon></Cell>
        <Cell className="w-[22px]"><Icon w={8} h={5} stroke="#eee"><path d="M.5 4.500L4 1l3.500 3.500" /></Icon></Cell>
        <Cell className="w-[10px]"><Icon w={12} h={8} stroke="none" fill="#1687da"><path d="M2.500 8C-.5 8-.5 4 2 3.700 3 0 7 0 8 2.500c3 0 4 1.500 4 3.500 0 1-1 2-2 2z" /></Icon></Cell>
        <Cell className="w-[22px]"><Icon w={12} h={8} stroke="#eee"><path d="M2.500 2.500h8v5h-8zM11 4v2" /><path d="M4 4h5v2.500H4zM0 1h4v2H0z" fill="#eee" strokeWidth={0.5} /></Icon></Cell>
        <Cell className="w-[12px]"><Icon w={11} h={9} stroke="#eee" sw={0.9}><path d="M.5 3h2L5 .8v7.400L2.500 6h-2zM6.500 3c1 1 1 2 0 3M8 1.500c2 2 2 4 0 6M9.500.5c2 2 2 6 0 8" /></Icon></Cell>
        <Cell className="w-[20px]"><Icon w={9} h={9} stroke="#bbb"><path d="M.5 8.500c0-4 4-8 8-8M3 8.500c0-3 3-5.500 5.500-5.500M5.500 8.500C5.500 7 7 5.500 8.500 5.500" /><circle cx="8" cy="8" r=".6" fill="#fff" /></Icon></Cell>
        <Cell className="w-[17px]">ENG</Cell>
        <div className="w-[52px] text-center text-[8.4px] leading-[12px] whitespace-nowrap">8:43 PM<br />10/27/2019</div>
        <Cell className="mr-[13px] w-[18px]"><Icon w={11} h={11} stroke="#eee"><path d="M.5.500h10v8H7.500l-2 2v-2h-5z" /></Icon></Cell>
      </div>
    </div>
  );
}

export default function App() {
  return (
    <div className="flex h-[720px] w-[1280px] flex-col overflow-hidden bg-[#cbcbcb] font-['Open_Sans','Noto_Sans',sans-serif] leading-none tracking-[-0.34px]">
      <TitleBar />
      <TabStrip />
      <Ribbon />
      <OptionsBar />
      <div className="flex h-[558px] pt-[2px] pr-[3px] pl-[2px]">
        <div className="mr-px flex w-[222px] flex-col gap-[2px] pb-px">
          <PropertiesPanel />
          <ProjectBrowser />
        </div>
        <div className="flex flex-1 flex-col">
          <ViewTabs />
          <div className="flex h-[529px]">
            <div className="relative w-[1041px] overflow-hidden bg-white">
              <Drawing />
              <NavBar />
            </div>
            <div className="flex flex-1 flex-col items-center justify-between bg-[#f0f0f0] py-[4px]">
              <Icon w={6} h={4} stroke="#333" sw={1.200}><path d="M.5 3.500L3 1l2.500 2.500" /></Icon>
              <div className="h-[11px] w-[10px] bg-[#cdcdcd]" />
              <Icon w={6} h={4} stroke="#333" sw={1.200}><path d="M.5.500L3 3 5.500.5" /></Icon>
            </div>
          </div>
          <ViewControls />
          <div className="h-px bg-white" />
        </div>
      </div>
      <StatusBar />
      <Taskbar />
    </div>
  );
}
